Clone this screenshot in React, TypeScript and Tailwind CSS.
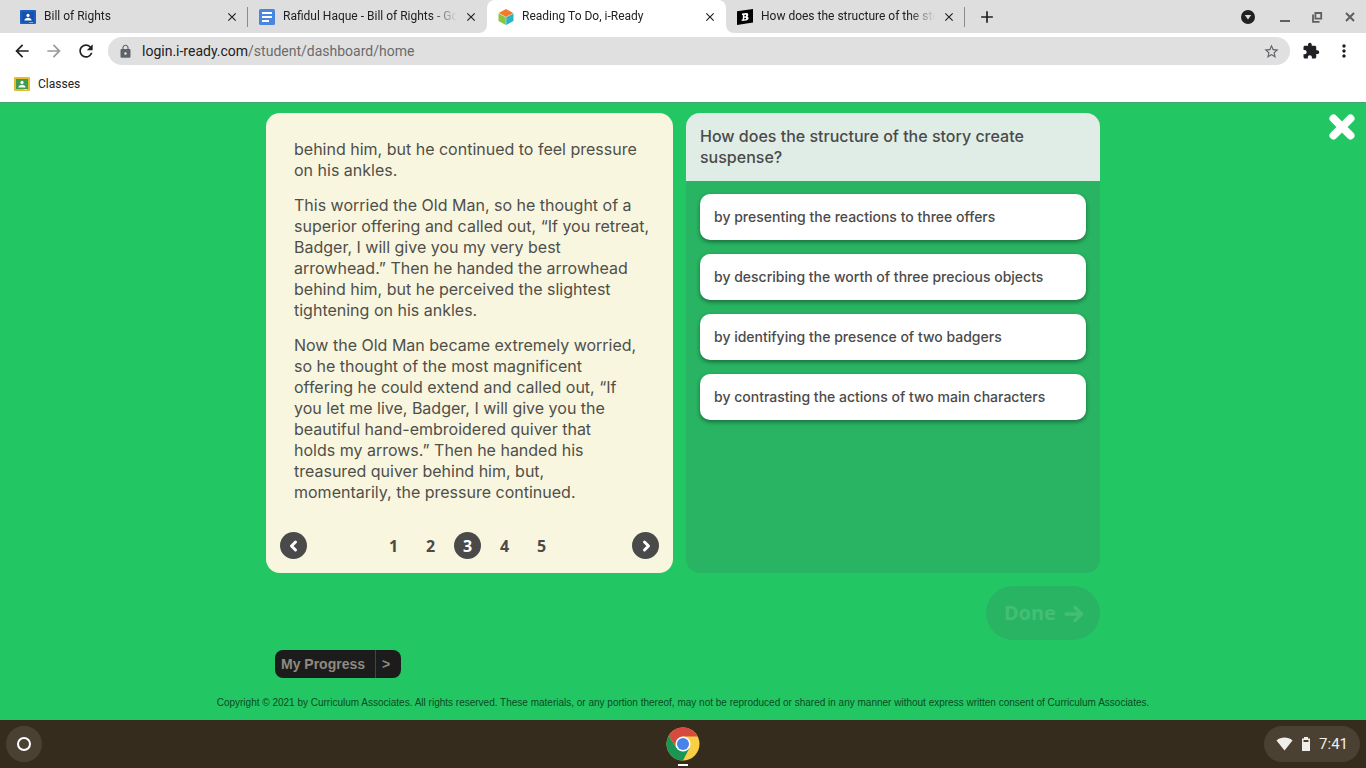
import type { ReactNode } from "react";
import {
  MdAdd,
  MdArrowBack,
  MdArrowForward,
  MdClose,
  MdExtension,
  MdLock,
  MdMoreVert,
  MdRefresh,
  MdStarOutline,
} from "react-icons/md";

const paragraphs = [
  "behind him, but he continued to feel pressure\non his ankles.",
  "This worried the Old Man, so he thought of a\nsuperior offering and called out, “If you retreat,\nBadger, I will give you my very best\narrowhead.” Then he handed the arrowhead\nbehind him, but he perceived the slightest\ntightening on his ankles.",
  "Now the Old Man became extremely worried,\nso he thought of the most magnificent\noffering he could extend and called out, “If\nyou let me live, Badger, I will give you the\nbeautiful hand-embroidered quiver that\nholds my arrows.” Then he handed his\ntreasured quiver behind him, but,\nmomentarily, the pressure continued.",
];

const answers = [
  "by presenting the reactions to three offers",
  "by describing the worth of three precious objects",
  "by identifying the presence of two badgers",
  "by contrasting the actions of two main characters",
];

function ClassroomIcon({ frame, board }: { frame: string; board: string }) {
  return (
    <svg width="16" height="14" viewBox="0 0 16 14">
      <rect width="16" height="14" rx="1" fill={frame} />
      <rect x="2" y="2" width="12" height="10" fill={board} />
      <circle cx="8" cy="5.4" r="1.6" fill="#fff" />
      <path d="M4.4 10.6c0-2 2-2.9 3.6-2.9s3.6.9 3.6 2.9z" fill="#fff" />
      <rect x="9.5" y="12" width="3.5" height="1" fill="#fff" opacity=".5" />
    </svg>
  );
}

function DocsIcon() {
  return (
    <svg width="16" height="16" viewBox="0 0 16 16">
      <rect width="16" height="16" rx="1.5" fill="#4a86e0" />
      <path d="M3 4h10M3 8h10M3 12h7" stroke="#fff" strokeWidth="1.8" />
    </svg>
  );
}

function CubeIcon() {
  return (
    <svg width="16" height="16" viewBox="0 0 16 16">
      <path d="M8 0l7.3 4L8 8 .7 4z" fill="#f47b2a" />
      <path d="M.5 4.4L7.8 8.3V16L.5 12z" fill="#8ac53f" />
      <path d="M15.5 4.4L8.2 8.3V16l7.3-4z" fill="#2bb5c4" />
    </svg>
  );
}

function BrainlyIcon() {
  return (
    <svg width="16" height="16" viewBox="0 0 16 16">
      <path d="M0 2.2L16 0v13.6L0 16z" fill="#000" />
      <path
        d="M5 4.6l4.2-.5c2.4-.2 2.7 2.4 1.2 3.4 1.9.7 1.4 3.7-1.2 4l-4.6.5.2-1.5.9-.1.2-4.3-.9.1zM7.4 5.9v1.5l1-.1c.9-.2.9-1.6 0-1.5zM7.3 8.8v1.6l1.1-.1c1.1-.2 1-1.8 0-1.6z"
        fill="#fff"
        fillRule="evenodd"
      />
    </svg>
  );
}

function ChromeIcon() {
  return (
    <svg width="34" height="34" viewBox="0 0 34 34">
      <circle cx="17" cy="17" r="16.5" fill="#f8cf45" />
      <path d="M2.7 8.8A16.5 16.5 0 0 1 31.3 8.8L31.5 9.5H17L10.5 20.7z" fill="#d64b3e" />
      <path d="M2.7 8.8A16.5 16.5 0 0 0 17 33.5L23.6 20.8 17 24.6 10.4 20.8z" fill="#1a9556" />
      <circle cx="17" cy="17" r="7.6" fill="#fff" />
      <circle cx="17" cy="17" r="6" fill="#4683ea" />
    </svg>
  );
}

function Tab({ title, icon, active, divider }: { title: string; icon: ReactNode; active?: boolean; divider?: boolean }) {
  return (
    <div className={active ? "relative flex h-full w-[239px] items-center rounded-t-lg bg-white" : "relative flex h-full w-[239px] items-center"}>
      {active && (
        <>
          <span className="absolute bottom-0 -left-2 size-2 bg-white before:absolute before:inset-0 before:rounded-br-lg before:bg-[#dedede]" />
          <span className="absolute bottom-0 -right-2 size-2 bg-white before:absolute before:inset-0 before:rounded-bl-lg before:bg-[#dedede]" />
        </>
      )}
      <a href="#" className="flex min-w-0 flex-1 items-center gap-2 pr-1.5 pl-[11px]">
        <span className="shrink-0">{icon}</span>
        <span className="flex-1 overflow-hidden pb-0.5 whitespace-nowrap mask-r-from-85% text-xs text-[#202124]">{title}</span>
      </a>
      <button aria-label="Close tab" className="mr-2 flex size-4 items-center justify-center text-[#202124]">
        <MdClose size={14} />
      </button>
      {divider && <span className="absolute right-0 h-5 w-px bg-[#8b8b8b]" />}
    </div>
  );
}

function BrowserChrome() {
  return (
    <header className="bg-white font-[Roboto,sans-serif]">
      <div className="flex h-[33px] items-center bg-[#dedede] pl-[9px] text-[#202124]">
        <Tab title="Bill of Rights" icon={<ClassroomIcon frame="#1a5fc4" board="#1750ad" />} divider />
        <Tab title="Rafidul Haque - Bill of Rights - Google Docs" icon={<DocsIcon />} />
        <Tab title="Reading To Do, i-Ready" icon={<CubeIcon />} active />
        <Tab title="How does the structure of the story create" icon={<BrainlyIcon />} divider />
        <button aria-label="New tab" className="ml-3">
          <MdAdd size={20} />
        </button>
        <div className="ml-auto flex items-center gap-[18px] pr-2 text-[#5f5f5f]">
          <button aria-label="Search tabs" className="mr-1">
            <svg width="16" height="16" viewBox="0 0 16 16">
              <circle cx="8" cy="8" r="7" fill="#202124" />
              <path d="M4.8 6h6.4L8 10.4z" fill="#dedede" />
            </svg>
          </button>
          <button aria-label="Minimize">
            <svg width="14" height="14" viewBox="0 0 14 14">
              <path d="M2 11h10" stroke="currentColor" strokeWidth="2" />
            </svg>
          </button>
          <button aria-label="Restore">
            <svg width="14" height="14" viewBox="0 0 14 14" fill="none" stroke="currentColor" strokeWidth="1.8">
              <path d="M5.4 3h5.8v5.600H5.4zM3 4.500v7.300h6.500" />
            </svg>
          </button>
          <button aria-label="Close window">
            <svg width="16" height="14" viewBox="0 0 16 14">
              <path d="M4 3l8 8M12 3l-8 8" stroke="currentColor" strokeWidth="2" />
            </svg>
          </button>
        </div>
      </div>

      {/* Toolbar */}
      <div className="flex h-9 items-center px-3 text-[#202124]">
        <div className="flex items-center gap-3">
          <button aria-label="Back"><MdArrowBack size={20} /></button>
          <button aria-label="Forward" className="text-[#9a9a9a]"><MdArrowForward size={20} /></button>
          <button aria-label="Reload"><MdRefresh size={20} /></button>
        </div>
        <div className="ml-3 flex h-7 flex-1 items-center rounded-full bg-[#e0e0e0] px-2.5">
          <MdLock size={15} className="text-[#5f6368]" />
          <a href="#" className="ml-[9px] flex-1 text-sm text-[#6b6b6b]">
            <span className="text-[#202124]">login.i-ready.com</span>/student/dashboard/home
          </a>
          <button aria-label="Bookmark" className="text-[#5f6368]"><MdStarOutline size={17} /></button>
        </div>
        <button aria-label="Extensions" className="ml-3"><MdExtension size={18} /></button>
        <button aria-label="Menu" className="ml-3.5"><MdMoreVert size={20} /></button>
      </div>

      {/* Bookmarks */}
      <div className="flex h-[33px] items-center px-3.5 pb-1">
        <a href="#" className="flex items-center gap-2 text-xs text-[#202124]">
          <ClassroomIcon frame="#e5bb32" board="#3f9b50" />
          Classes
        </a>
      </div>
    </header>
  );
}

function PageArrow({ label, d }: { label: string; d: string }) {
  return (
    <button aria-label={label} className="flex size-[27px] items-center justify-center rounded-full bg-[#4b4a4a]">
      <svg width="14" height="14" viewBox="0 0 14 14" fill="none" stroke="#fff" strokeWidth="3" strokeLinecap="round" strokeLinejoin="round">
        <path d={d} />
      </svg>
    </button>
  );
}

function Passage() {
  return (
    <article className="flex w-[407px] flex-col rounded-[14px] bg-[#f9f6df] px-3.5 pt-[26px] pb-3.5">
      <div className="flex flex-col gap-3.5 px-3.5 text-base leading-[21px] text-[#4f4f4a]">
        {paragraphs.map((text) => (
          <p key={text} className="whitespace-pre">{text}</p>
        ))}
      </div>
      <nav className="mt-auto flex items-center justify-between font-['Noto_Sans',sans-serif]">
        <PageArrow label="Previous page" d="M8.5 3L4.5 7l4 4" />
        <div className="mr-1 flex gap-2.5">
          {[1, 2, 3, 4, 5].map((n) => (
            <button
              key={n}
              className={
                n === 3
                  ? "size-[27px] rounded-full bg-[#4b4a4a] text-base font-bold text-white"
                  : "size-[27px] rounded-full text-base font-bold text-[#4b4a4a]"
              }
            >
              {n}
            </button>
          ))}
        </div>
        <PageArrow label="Next page" d="M5.5 3l4 4-4 4" />
      </nav>
    </article>
  );
}

function Question() {
  return (
    <section className="w-[414px] overflow-hidden rounded-[14px] bg-[#28b462] font-medium text-[#4b4a4a]">
      <h1 className="h-[68px] bg-[#e0ede6] px-3.5 pt-[13px] text-base leading-[21px]">
        How does the structure of the story create
        <br />
        suspense?
      </h1>
      <div className="flex flex-col gap-3.5 p-3.5 pt-[13px]">
        {answers.map((answer) => (
          <button key={answer} className="h-[46px] rounded-[10px] bg-white px-3.5 text-left text-sm whitespace-nowrap shadow-[0_2px_4px_rgba(0,0,0,0.4)]">
            {answer}
          </button>
        ))}
      </div>
    </section>
  );
}

export default function App() {
  return (
    <div className="flex min-h-screen flex-col">
      <BrowserChrome />

      <main className="relative flex flex-1 flex-col items-center border-t border-[#3fa873] bg-[#22c764] pt-2.5 font-[Inter,sans-serif]">
        <button aria-label="Close lesson" className="absolute top-[11px] right-[11px]">
          <svg width="26" height="26" viewBox="0 0 26 26">
            <path d="M4.5 4.5l17 17M21.5 4.5l-17 17" stroke="#fff" strokeWidth="8" strokeLinecap="round" />
          </svg>
        </button>

        <div>
          <div className="flex min-h-[460px] gap-[13px]">
            <Passage />
            <Question />
          </div>
          <div className="mt-[13px] flex justify-end">
            <button disabled className="flex h-[54px] items-center gap-2 rounded-full bg-[#28b462] pr-4 pl-[18px] font-['Noto_Sans',sans-serif] text-xl font-bold text-[#44be76]">
              Done
              <svg width="20" height="20" viewBox="0 0 20 20" fill="none" stroke="currentColor" strokeWidth="3.4" strokeLinecap="round" strokeLinejoin="round">
                <path d="M2 11h15M11 4.500l6.500 6.500L11 17.500" />
              </svg>
            </button>
          </div>
          <button className="mt-2.5 ml-[9px] flex h-7 items-center rounded-lg bg-[#1c1c1c] font-['Liberation_Sans',sans-serif] text-sm font-bold text-[#8f8b80]">
            <span className="pr-2.5 pl-1.5">My Progress</span>
            <span className="flex h-full w-[26px] items-center border-l border-[#444] pl-1.5">&gt;</span>
          </button>
        </div>

        <footer className="mt-auto pb-2.5 font-['Liberation_Sans',sans-serif] text-[10px] leading-[15px] whitespace-nowrap text-[#0b4a22]">
          Copyright © 2021 by Curriculum Associates. All rights reserved. These materials, or any portion thereof, may not be reproduced or shared in any manner without express written consent of Curriculum Associates.
        </footer>
      </main>

      {/* Shelf */}
      <div className="grid h-12 grid-cols-3 items-center bg-[#362c1d] px-1.5 font-[Roboto,sans-serif]">
        <button aria-label="Launcher" className="flex size-9 items-center justify-center rounded-full bg-[#4b4132]">
          <span className="size-3.5 rounded-full border-2 border-white" />
        </button>
        <button aria-label="Chrome" className="relative justify-self-center">
          <ChromeIcon />
          <span className="absolute -bottom-[5px] left-3 h-0.5 w-2.5 bg-white" />
        </button>
        <button className="flex h-9 items-center gap-2 justify-self-end rounded-full bg-[#4b4132] px-3 text-[15px] text-[#f0eeea]">
          <svg width="17" height="14" viewBox="0 0 17 14">
            <path d="M.5 3.4C5-.4 12-.4 16.500 3.400L8.500 13.500z" fill="currentColor" />
          </svg>
          <svg width="10" height="14" viewBox="0 0 10 14">
            <path d="M3 0h4v1.500h2V14H1V1.500h2z" fill="currentColor" />
            <path d="M2.500 3h5v2h-5z" fill="#4b4132" />
          </svg>
          7:41
        </button>
      </div>
    </div>
  );
}
